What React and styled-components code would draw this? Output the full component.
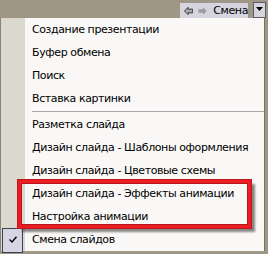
import styled, { createGlobalStyle } from "styled-components";

const GlobalStyle = createGlobalStyle`
  html, body {
    margin: 0;
    padding: 0;
    background: #9e9785;
  }
  body {
    font-family: "DejaVu Sans", Tahoma, sans-serif;
    font-size: 11px;
    color: #000;
  }
`;

const items = [
  "Создание презентации",
  "Буфер обмена",
  "Поиск",
  "Вставка картинки",
  "-",
  "Разметка слайда",
  "Дизайн слайда - Шаблоны оформления",
  "Дизайн слайда - Цветовые схемы",
  "Дизайн слайда - Эффекты анимации",
  "Настройка анимации",
  { label: "Смена слайдов", checked: true },
];

const App = () => {
  return (
    <>
      <GlobalStyle />
      <Screen>
        <TopBar>
          <Toolbar>
            <svg width="10" height="10" viewBox="0 0 10 10">
              <polygon
                points="0.5,5 4.5,1 4.5,3 9.5,3 9.5,7 4.5,7 4.5,9"
                fill="#a8a8a8"
                stroke="#2e2e2e"
                strokeWidth="1"
              />
            </svg>
            <svg width="10" height="10" viewBox="0 0 10 10">
              <polygon
                points="9.5,5 5.5,1 5.5,3 0.5,3 0.5,7 5.5,7 5.5,9"
                fill="#9c9c9c"
              />
            </svg>
            <ToolLabel>Смена</ToolLabel>
          </Toolbar>
          <DropButton>
            <svg width="7" height="4" viewBox="0 0 7 4">
              <polygon points="0,0 7,0 3.5,4" fill="#000" />
            </svg>
          </DropButton>
        </TopBar>

        <Menu>
          {items.map((it, i) => {
            if (it === "-") {
              return (
                <SepRow key={i}>
                  <Gutter />
                  <SepLine />
                </SepRow>
              );
            }
            const label = typeof it === "string" ? it : it.label;
            const checked = typeof it === "object" && it.checked;
            return (
              <Item key={i}>
                <Gutter>
                  {checked && (
                    <CheckBox>
                      <svg width="8" height="7" viewBox="0 0 8 7">
                        <polyline
                          points="0.5,3.5 3,6 7.5,0.8"
                          fill="none"
                          stroke="#000"
                          strokeWidth="1.4"
                        />
                      </svg>
                    </CheckBox>
                  )}
                </Gutter>
                <Label>{label}</Label>
              </Item>
            );
          })}
        </Menu>

        <Highlight />
      </Screen>
    </>
  );
};

const Screen = styled.div`
  position: relative;
  width: 268px;
  height: 254px;
  overflow: hidden;
  background: #9e9785;
`;

const TopBar = styled.div`
  height: 18px;
  display: flex;
  justify-content: flex-end;
  align-items: flex-start;
  padding-right: 2px;
  box-sizing: border-box;
`;

const Toolbar = styled.div`
  margin-top: 3px;
  width: 68px;
  height: 15px;
  background: #d5d4df;
  display: flex;
  align-items: center;
  gap: 5px;
  padding-left: 4px;
  box-sizing: border-box;
`;

const ToolLabel = styled.span`
  margin-left: 1px;
  letter-spacing: -0.4px;
  line-height: 15px;
`;

const DropButton = styled.div`
  margin-top: 2px;
  margin-left: 5px;
  width: 13px;
  height: 16px;
  box-sizing: border-box;
  border: 1px solid #5d5c66;
  background: #d5d4df;
  display: flex;
  align-items: center;
  justify-content: center;
  padding-bottom: 3px;
`;

const Menu = styled.div`
  width: 265px;
  box-sizing: border-box;
  border-left: 1px solid #8a8579;
  border-right: 1px solid #77736a;
  background: #f9f8f6;
  display: flex;
  flex-direction: column;
`;

const Item = styled.div`
  height: 23px;
  display: flex;
  align-items: stretch;
`;

const Gutter = styled.div`
  width: 24px;
  flex: none;
  background: #dbd8d0;
  position: relative;
`;

const Label = styled.div`
  padding-left: 7px;
  display: flex;
  align-items: center;
  white-space: nowrap;
  letter-spacing: -0.4px;
`;

const SepRow = styled.div`
  height: 3px;
  display: flex;
`;

const SepLine = styled.div`
  flex: 1;
  margin-left: 7px;
  margin-top: 1px;
  height: 1px;
  background: #a6a5a8;
`;

const CheckBox = styled.div`
  margin-left: 1px;
  width: 21px;
  height: 25px;
  box-sizing: border-box;
  border: 1px solid #3f3f55;
  background: #d6d5e4;
  display: flex;
  align-items: center;
  justify-content: center;
  padding-bottom: 2px;
`;

const Highlight = styled.div`
  position: absolute;
  left: 18px;
  top: 180px;
  width: 233px;
  height: 48px;
  box-sizing: border-box;
  border: 3px solid #ec1c24;
  box-shadow: inset 0 0 0 1px #b8141a, 0 0 0 1px #c0161c,
    4px 4px 2px rgba(40, 40, 40, 0.55);
  pointer-events: none;
`;

export default App;
